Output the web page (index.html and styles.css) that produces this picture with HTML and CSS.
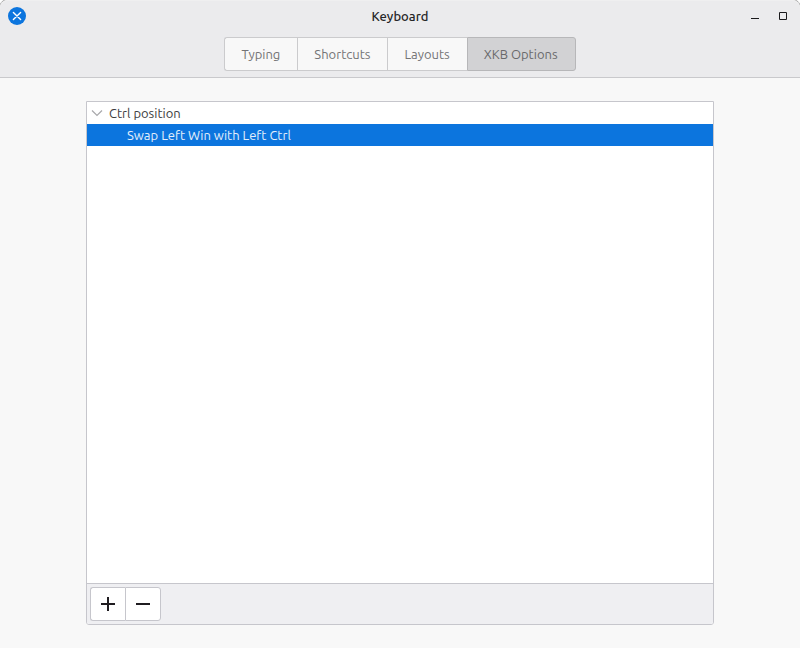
FILE: index.html
```html
<!DOCTYPE html>
<html lang="en">
<head>
    <meta charset="utf-8">
    <title>Keyboard</title>
    <meta name="viewport" content="width=device-width, initial-scale=1.0">
    <link rel="stylesheet" href="styles.css">
</head>
<body>
    <div class="window">
        <header class="header">
            <div class="titlebar">
                <button type="button" class="close" aria-label="Close">
                    <svg width="18" height="18" viewBox="0 0 18 18">
                        <circle cx="9" cy="9" r="9" fill="#0c75de"/>
                        <path d="M5.4 5.4l7.2 7.2M12.6 5.4l-7.2 7.2" stroke="#fff" stroke-width="1.4" stroke-linecap="round"/>
                    </svg>
                </button>
                <h1>Keyboard</h1>
                <div class="controls">
                    <button type="button" aria-label="Minimize">
                        <svg width="8" height="8" viewBox="0 0 8 8"><path d="M0 6h8v1H0z" fill="#1a1a1c"/></svg>
                    </button>
                    <button type="button" aria-label="Maximize">
                        <svg width="8" height="8" viewBox="0 0 8 8"><path d="M.5.5h7v7h-7z" fill="none" stroke="#1a1a1c"/></svg>
                    </button>
                </div>
            </div>
            <nav class="tabs">
                <button type="button">Typing</button>
                <button type="button">Shortcuts</button>
                <button type="button">Layouts</button>
                <button type="button" class="active">XKB Options</button>
            </nav>
        </header>

        <main class="content">
            <div class="frame">
                <ul class="tree">
                    <li>
                        <div class="row">
                            <button type="button" class="expander" aria-label="Collapse">
                                <svg width="12" height="8" viewBox="0 0 12 8"><path d="M1 1.5l5 5 5-5" fill="none" stroke="#a8a8ab" stroke-width="1.2"/></svg>
                            </button>
                            <span>Ctrl position</span>
                        </div>
                        <ul>
                            <li class="row child selected">Swap Left Win with Left Ctrl</li>
                        </ul>
                    </li>
                </ul>
                <div class="toolbar">
                    <div class="button-group">
                        <button type="button" aria-label="Add">
                            <svg width="14" height="14" viewBox="0 0 14 14"><path d="M0 6h6V0h2v6h6v2H8v6H6V8H0z" fill="#1f1c20"/></svg>
                        </button>
                        <button type="button" aria-label="Remove">
                            <svg width="14" height="14" viewBox="0 0 14 14"><path d="M0 6h14v2H0z" fill="#1f1c20"/></svg>
                        </button>
                    </div>
                </div>
            </div>
        </main>
    </div>
</body>
</html>
```

FILE: styles.css
```css
* {
    box-sizing: border-box;
}

body {
    margin: 0;
    background-color: #ffffff;
    color: #3c3c3e;
    font-family: Ubuntu, "Noto Sans", sans-serif;
    font-size: 13px;
    line-height: 22px;
}

button {
    margin: 0;
    padding: 0;
    border: none;
    background: none;
    color: inherit;
    font: inherit;
}

svg {
    display: block;
}

ul {
    margin: 0;
    padding: 0;
    list-style: none;
}

.window {
    display: flex;
    flex-direction: column;
    min-height: 100vh;
    border-radius: 8px 8px 0 0;
    background-color: #f8f8f8;
    box-shadow: 0 0 0 1px #a8a8a8;
}

/* Header: title bar and tabs */
.header {
    padding-bottom: 6px;
    border-bottom: 1px solid #c9c9cc;
    border-radius: 8px 8px 0 0;
    background-color: #ebebed;
    box-shadow: inset 0 1px #efeff0;
}

.titlebar {
    display: grid;
    grid-template-columns: 1fr auto 1fr;
    align-items: center;
    height: 32px;
    padding: 0 8px;
}

.close {
    justify-self: start;
}

h1 {
    margin: 0;
    color: #252527;
    font-size: 13px;
    font-weight: 500;
}

.controls {
    display: flex;
    justify-content: flex-end;
    gap: 20px;
    padding-right: 5px;
}

.tabs {
    display: flex;
    justify-content: center;
    padding-top: 5px;
}

.tabs button {
    height: 34px;
    padding: 0 17px 0 16px;
    border: 1px solid #cbcbcd;
    border-right: none;
    background-color: #f8f8f8;
    color: #747476;
}

.tabs button:first-child {
    border-radius: 3px 0 0 3px;
}

.tabs button:last-child {
    border-right: 1px solid #b7b7b9;
    border-radius: 0 3px 3px 0;
}

.tabs .active {
    border-color: #b7b7b9;
    background-color: #d2d2d4;
    color: #69696b;
}

/* Options list */
.content {
    display: flex;
    flex: 1;
    padding: 23px 86px;
}

.frame {
    display: flex;
    flex: 1;
    flex-direction: column;
    border: 1px solid #c6c6cc;
    border-radius: 0 0 3px 3px;
    background-color: #ffffff;
}

.tree {
    flex: 1;
}

.row {
    display: flex;
    align-items: center;
    height: 22px;
}

.expander {
    margin: 0 6px 0 4px;
}

.child {
    padding-left: 40px;
}

.selected {
    background-color: #0c75de;
    color: #e4effb;
}

.toolbar {
    padding: 3px;
    border-top: 1px solid #c6c6cc;
    border-radius: 0 0 2px 2px;
    background-color: #efeff2;
}

.button-group {
    display: flex;
}

.button-group button {
    display: flex;
    align-items: center;
    justify-content: center;
    width: 36px;
    height: 34px;
    border: 1px solid #c6c6cc;
    background-color: #ffffff;
}

.button-group button:first-child {
    width: 35px;
    border-right: none;
    border-radius: 3px 0 0 3px;
}

.button-group button:last-child {
    border-radius: 0 3px 3px 0;
}
```
